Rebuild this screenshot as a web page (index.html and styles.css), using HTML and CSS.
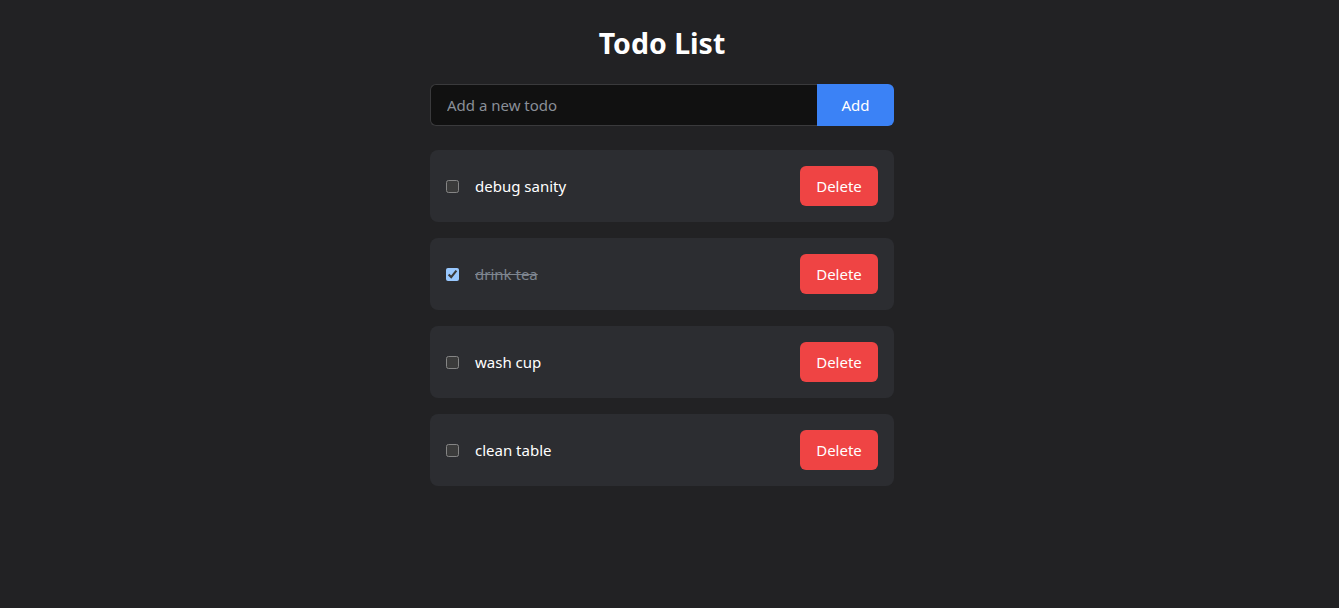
FILE: index.html
```html
<!DOCTYPE html>
<html lang="en">
<head>
<meta charset="utf-8">
<title>Todo List</title>
<link rel="stylesheet" href="styles.css">
</head>
<body>
<main class="app">
  <h1 class="title">Todo List</h1>
  <form class="add-form">
    <input class="add-input" type="text" placeholder="Add a new todo">
    <button class="add-btn" type="button">Add</button>
  </form>
  <ul class="list">
    <li class="item">
      <label class="item-main"><input type="checkbox" class="check"><span class="text">debug sanity</span></label>
      <button class="del-btn" type="button">Delete</button>
    </li>
    <li class="item">
      <label class="item-main"><input type="checkbox" class="check" checked><span class="text done">drink tea</span></label>
      <button class="del-btn" type="button">Delete</button>
    </li>
    <li class="item">
      <label class="item-main"><input type="checkbox" class="check"><span class="text">wash cup</span></label>
      <button class="del-btn" type="button">Delete</button>
    </li>
    <li class="item">
      <label class="item-main"><input type="checkbox" class="check"><span class="text">clean table</span></label>
      <button class="del-btn" type="button">Delete</button>
    </li>
  </ul>
</main>
</body>
</html>
```

FILE: styles.css
```css
html { color-scheme: dark; }
body {
  margin: 0;
  padding-right: 15px;
  background: #222224;
  color: #ffffff;
  font-family: "Noto Sans", "Open Sans", sans-serif;
}
.app {
  width: 464px;
  margin: 0 auto;
  padding-top: 24px;
}
.title {
  margin: 0 0 22px;
  text-align: center;
  font-size: 28.5px;
  line-height: 38px;
  font-weight: 700;
}
.add-form {
  display: flex;
  margin: 0 0 24px;
}
.add-input {
  flex: 1;
  height: 42px;
  box-sizing: border-box;
  background: #111111;
  border: 1px solid #3a3a3c;
  border-right: none;
  border-radius: 6px 0 0 6px;
  padding: 0 16px;
  color: #fff;
  font: inherit;
  font-size: 15px;
  outline: none;
}
.add-input::placeholder { color: #8a8f98; }
.add-btn {
  width: 77px;
  height: 42px;
  background: #3b82f6;
  color: #fff;
  border: none;
  border-radius: 0 6px 6px 0;
  font: inherit;
  font-size: 15px;
}
.list {
  list-style: none;
  margin: 0;
  padding: 0;
  display: flex;
  flex-direction: column;
  gap: 16px;
}
.item {
  display: flex;
  align-items: center;
  justify-content: space-between;
  height: 72px;
  box-sizing: border-box;
  padding: 0 16px;
  background: #2c2d31;
  border-radius: 8px;
}
.item-main {
  display: flex;
  align-items: center;
  gap: 16px;
}
.check {
  width: 13px;
  height: 13px;
  margin: 0;
}
.text {
  font-size: 15px;
  color: #fff;
}
.text.done {
  color: #7e858f;
  text-decoration: line-through;
}
.del-btn {
  width: 78px;
  height: 40px;
  background: #ef4444;
  color: #fff;
  border: none;
  border-radius: 6px;
  font: inherit;
  font-size: 15px;
}
```
